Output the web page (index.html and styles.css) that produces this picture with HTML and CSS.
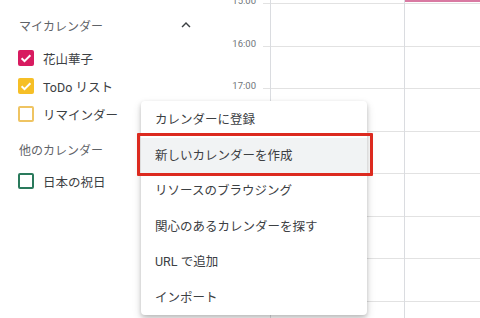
FILE: index.html
```html
<!DOCTYPE html>
<html lang="ja">
<head>
<meta charset="utf-8">
<title>カレンダー</title>
<link rel="stylesheet" href="styles.css">
</head>
<body>
<div class="app">
  <aside class="sidebar">
    <div class="sec-head">
      <span>マイカレンダー</span>
      <svg class="chev" viewBox="0 0 24 24" width="18" height="18"><path d="M7.41 15.41L12 10.83l4.59 4.58L18 14l-6-6-6 6z"/></svg>
    </div>
    <ul class="cal-list">
      <li class="cal"><span class="cb cb-pink"><svg viewBox="0 0 16 16" width="16" height="16"><path d="M3.6 8.2l2.9 2.9 5.9-5.9"/></svg></span><span>花山華子</span></li>
      <li class="cal"><span class="cb cb-yellow"><svg viewBox="0 0 16 16" width="16" height="16"><path d="M3.6 8.2l2.9 2.9 5.9-5.9"/></svg></span><span>ToDo リスト</span></li>
      <li class="cal"><span class="cb cb-gold-o"></span><span>リマインダー</span></li>
    </ul>
    <div class="sec-head sec-other"><span>他のカレンダー</span></div>
    <ul class="cal-list cal-list-other">
      <li class="cal"><span class="cb cb-green-o"></span><span>日本の祝日</span></li>
    </ul>
  </aside>
  <div class="timecol">
    <div class="tlabel">15:00</div>
    <div class="tlabel">16:00</div>
    <div class="tlabel">17:00</div>
  </div>
  <div class="grid">
    <div class="hline r2"></div>
    <div class="hline r3"></div>
    <div class="hline r4"></div>
    <div class="hline r5"></div>
    <div class="hline r6"></div>
    <div class="hline r7"></div>
    <div class="hline r8"></div>
    <div class="hline r9"></div>
    <div class="day d1"></div>
    <div class="day d2"></div>
    <div class="event"></div>
  </div>
  <div class="menu">
    <div class="mitem">カレンダーに登録</div>
    <div class="mitem active">新しいカレンダーを作成<span class="mark"></span></div>
    <div class="mitem">リソースのブラウジング</div>
    <div class="mitem">関心のあるカレンダーを探す</div>
    <div class="mitem">URL で追加</div>
    <div class="mitem">インポート</div>
  </div>
</div>
</body>
</html>
```
FILE: styles.css
```css
html, body {
  margin: 0;
  padding: 0;
  background: #fff;
}
body {
  width: 480px;
  height: 318px;
  overflow: hidden;
  font-family: Roboto, "Noto Sans CJK JP", sans-serif;
  color: #3c4043;
}
.app {
  position: relative;
  display: flex;
  width: 480px;
  height: 318px;
  overflow: hidden;
}
.sidebar {
  width: 220px;
  flex: none;
  padding-left: 18px;
  box-sizing: border-box;
}
.sec-head {
  display: flex;
  align-items: center;
  justify-content: space-between;
  height: 28px;
  margin-top: 11px;
  padding-right: 25px;
  padding-left: 1px;
  font-size: 12px;
  color: #5f6368;
}
.chev {
  fill: #3c4043;
}
.sec-other {
  margin-top: 7px;
}
.cal-list {
  list-style: none;
  margin: 5px 0 0;
  padding: 0;
}
.cal-list-other {
  margin-top: 4px;
}
.cal {
  display: flex;
  align-items: center;
  height: 28px;
  font-size: 12.5px;
  color: #3c4043;
}
.cb {
  width: 16px;
  height: 16px;
  box-sizing: border-box;
  border-radius: 2px;
  margin-right: 9px;
  flex: none;
  display: flex;
}
.cb svg path {
  fill: none;
  stroke: #fff;
  stroke-width: 2;
}
.cb-pink { background: #d81b60; }
.cb-yellow { background: #f6bf26; }
.cb-gold-o { border: 2px solid #efc462; }
.cb-green-o { border: 2px solid #2a7a5c; }

.timecol {
  width: 43px;
  flex: none;
  margin-top: -5px;
  padding-right: 7px;
  box-sizing: border-box;
}
.tlabel {
  height: 42.5px;
  line-height: 12px;
  font-size: 9.5px;
  color: #70757a;
  text-align: right;
}
.grid {
  flex: 1;
  display: grid;
  grid-template-columns: 7px 134px 1fr;
  grid-template-rows: 3px repeat(8, 42.5px);
}
.hline {
  grid-column: 1 / -1;
  border-top: 1px solid #e2e2e2;
}
.r2 { grid-row: 2; }
.r3 { grid-row: 3; }
.r4 { grid-row: 4; }
.r5 { grid-row: 5; }
.r6 { grid-row: 6; }
.r7 { grid-row: 7; }
.r8 { grid-row: 8; }
.r9 { grid-row: 9; }
.day {
  grid-row: 1 / -1;
  border-left: 1px solid #dadce0;
}
.d1 { grid-column: 2; }
.d2 { grid-column: 3; }
.event {
  grid-column: 3;
  grid-row: 1;
  height: 2px;
  margin-left: 1px;
  background: #d97aa2;
}

.menu {
  position: absolute;
  left: 141px;
  top: 101px;
  width: 226px;
  padding: 1px 0 0;
  background: #fff;
  border-radius: 4px;
  box-shadow: 0 2px 4px rgba(0,0,0,0.18), 0 4px 10px rgba(0,0,0,0.14);
}
.mitem {
  position: relative;
  height: 35.5px;
  line-height: 35.5px;
  padding-left: 14px;
  font-size: 12.5px;
  color: #3c4043;
  white-space: nowrap;
}
.mitem.active {
  background: #f1f3f4;
}
.mark {
  position: absolute;
  left: -4px;
  right: -6px;
  top: -5px;
  bottom: -3px;
  border: 3px solid #dc2a1f;
  border-radius: 1px;
}
```
